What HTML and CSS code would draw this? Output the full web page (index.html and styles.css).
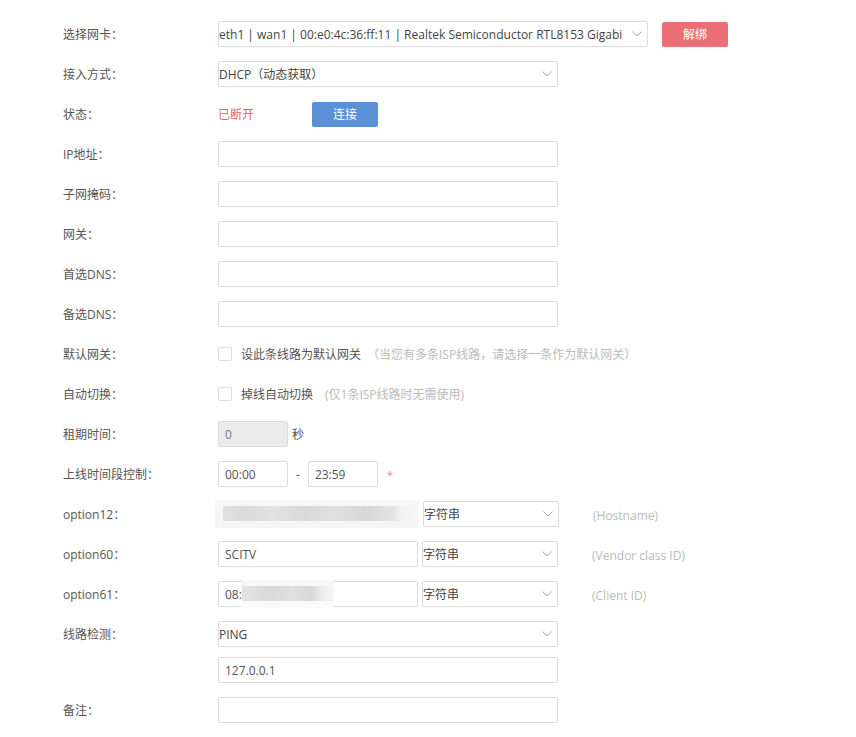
FILE: index.html
```html
<!DOCTYPE html>
<html>
<head>
<meta charset="utf-8">
<title>WAN设置</title>
<link rel="stylesheet" href="styles.css">
</head>
<body>
<div class="form">

<div class="row">
<label class="lbl">选择网卡：</label>
<div class="select wide"><span class="val">eth1 | wan1 | 00:e0:4c:36:ff:11 | Realtek Semiconductor RTL8153 Gigabi</span><svg class="arrow" width="10" height="6" viewBox="0 0 10 6"><path d="M0.5 0.5 L5 5 L9.5 0.5" fill="none" stroke="#aaa" stroke-width="1"/></svg></div>
<button class="btn red">解绑</button>
</div>

<div class="row">
<label class="lbl">接入方式：</label>
<div class="select"><span class="val">DHCP（动态获取）</span><svg class="arrow" width="10" height="6" viewBox="0 0 10 6"><path d="M0.5 0.5 L5 5 L9.5 0.5" fill="none" stroke="#aaa" stroke-width="1"/></svg></div>
</div>

<div class="row">
<label class="lbl">状态：</label>
<span class="status">已断开</span>
<button class="btn blue">连接</button>
</div>

<div class="row"><label class="lbl">IP地址：</label><input class="inp" type="text"></div>
<div class="row"><label class="lbl">子网掩码：</label><input class="inp" type="text"></div>
<div class="row"><label class="lbl">网关：</label><input class="inp" type="text"></div>
<div class="row"><label class="lbl">首选DNS：</label><input class="inp" type="text"></div>
<div class="row"><label class="lbl">备选DNS：</label><input class="inp" type="text"></div>

<div class="row">
<label class="lbl">默认网关：</label>
<span class="check"></span>
<span class="check-text">设此条线路为默认网关</span>
<span class="hint gw">（当您有多条ISP线路，请选择一条作为默认网关）</span>
</div>

<div class="row">
<label class="lbl">自动切换：</label>
<span class="check"></span>
<span class="check-text">掉线自动切换</span>
<span class="hint sw">(仅1条ISP线路时无需使用)</span>
</div>

<div class="row">
<label class="lbl">租期时间：</label>
<input class="inp short disabled" type="text" value="0" disabled>
<span class="unit">秒</span>
</div>

<div class="row">
<label class="lbl">上线时间段控制：</label>
<input class="inp short" type="text" value="00:00">
<span class="dash">-</span>
<input class="inp short" type="text" value="23:59">
<span class="star">*</span>
</div>

<div class="row">
<label class="lbl">option12：</label>
<div class="blur b12"></div>
<div class="select opt"><span class="val">字符串</span><svg class="arrow" width="10" height="6" viewBox="0 0 10 6"><path d="M0.5 0.5 L5 5 L9.5 0.5" fill="none" stroke="#aaa" stroke-width="1"/></svg></div>
<span class="hint opt-hint">(Hostname)</span>
</div>

<div class="row">
<label class="lbl">option60：</label>
<input class="inp mid" type="text" value="SCITV">
<div class="select opt"><span class="val">字符串</span><svg class="arrow" width="10" height="6" viewBox="0 0 10 6"><path d="M0.5 0.5 L5 5 L9.5 0.5" fill="none" stroke="#aaa" stroke-width="1"/></svg></div>
<span class="hint opt-hint">(Vendor class ID)</span>
</div>

<div class="row">
<label class="lbl">option61：</label>
<div class="inp mid masked"><span>08:</span><span class="blur b61"></span></div>
<div class="select opt"><span class="val">字符串</span><svg class="arrow" width="10" height="6" viewBox="0 0 10 6"><path d="M0.5 0.5 L5 5 L9.5 0.5" fill="none" stroke="#aaa" stroke-width="1"/></svg></div>
<span class="hint opt-hint">(Client ID)</span>
</div>

<div class="row top">
<label class="lbl">线路检测：</label>
<div class="stack">
<div class="select"><span class="val">PING</span><svg class="arrow" width="10" height="6" viewBox="0 0 10 6"><path d="M0.5 0.5 L5 5 L9.5 0.5" fill="none" stroke="#aaa" stroke-width="1"/></svg></div>
<input class="inp" type="text" value="127.0.0.1">
</div>
</div>

<div class="row"><label class="lbl">备注：</label><input class="inp" type="text"></div>

</div>
</body>
</html>
```

FILE: styles.css
```css
body {
 margin: 0;
 background: #fff;
 font-family: "Open Sans", "Noto Sans CJK SC", sans-serif;
 font-size: 12px;
 color: #555;
}

.form {
 padding: 14px 0 0 63px;
}

.row {
 display: flex;
 align-items: center;
 padding: 7px 0;
 height: 26px;
}

.row.top {
 align-items: flex-start;
 height: auto;
}

.lbl {
 width: 155px;
 flex-shrink: 0;
 line-height: 24px;
 padding-top: 2px;
 color: #555;
}

.select {
 box-sizing: border-box;
 width: 340px;
 height: 26px;
 border: 1px solid #dcdcdc;
 border-radius: 2px;
 display: flex;
 align-items: center;
 padding: 0 5px 0 0;
 background: #fff;
 color: #444;
}

.select.wide {
 width: 430px;
}

.select.opt {
 width: 136px;
 margin-left: 4px;
}

.select .val {
 flex: 1;
 white-space: nowrap;
 overflow: hidden;
 padding-right: 9px;
}

.select .arrow {
 flex-shrink: 0;
}

.btn {
 border: none;
 border-radius: 2px;
 height: 25px;
 width: 66px;
 color: #fff;
 font-family: inherit;
 font-size: 12px;
 cursor: pointer;
}

.btn.red {
 background: #ec6f75;
 margin-left: 14px;
}

.btn.blue {
 background: #5b8fd6;
 margin-left: 57px;
}

.status {
 color: #ef5f66;
 width: 37px;
}

.inp {
 box-sizing: border-box;
 width: 340px;
 height: 26px;
 border: 1px solid #dcdcdc;
 border-radius: 2px;
 padding: 0 6px;
 font-family: inherit;
 font-size: 12px;
 color: #555;
 background: #fff;
 outline: none;
}

.inp.short {
 width: 70px;
}

.inp.mid {
 width: 200px;
}

.inp.disabled {
 background: #ebebeb;
 color: #777;
}

.masked {
 display: flex;
 align-items: center;
 overflow: visible;
}

.check {
 box-sizing: border-box;
 width: 14px;
 height: 14px;
 border: 1px solid #dcdcdc;
 border-radius: 2px;
}

.check-text {
 margin-left: 9px;
 color: #555;
}

.hint {
 color: #bbb;
}

.hint.gw {
 margin-left: 6px;
}

.hint.sw {
 margin-left: 12px;
}

.hint.opt-hint {
 margin-left: 34px;
 padding-top: 2px;
}

.unit {
 margin-left: 4px;
}

.dash {
 margin: 0 8px 0 8px;
}

.star {
 color: #ef8a8a;
 font-size: 11px;
 margin-left: 9px;
}

.blur {
 display: block;
}

.blur.b12 {
 width: 204px;
 height: 28px;
 margin: -1px 0 -1px -3px;
 background: linear-gradient(to right, #f6f6f6 0, #f6f6f6 8px, #e1e1e1 8px, #dadada 30px, #e2e2e2 60px, #d9d9d9 90px, #e0e0e0 120px, #d7d7d7 150px, #e3e3e3 178px, #f2f2f2 186px, #f8f8f8 204px);
 box-shadow: inset 0 6px 0 #f7f7f7, inset 0 -7px 0 #f5f5f5;
}

.blur.b61 {
 width: 92px;
 height: 28px;
 margin: 0 -14px 0 0;
 background: linear-gradient(to right, #e3e3e3 0, #d9d9d9 30px, #e0e0e0 50px, #d8d8d8 70px, #ececec 80px, #f6f6f6 92px);
 box-shadow: inset 0 6px 0 #f8f8f8, inset 0 -7px 0 #fafafa;
}

.stack {
 display: flex;
 flex-direction: column;
 gap: 10px;
}
```
